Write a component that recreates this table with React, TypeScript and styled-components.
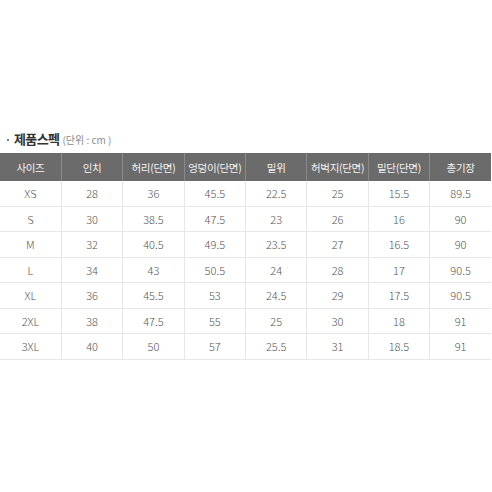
import React from 'react'
import styled, { createGlobalStyle } from 'styled-components'

const GlobalStyle = createGlobalStyle`
  html, body {
    margin: 0;
    padding: 0;
    background: #ffffff;
  }
  body {
    font-family: 'Noto Sans CJK KR', 'Noto Sans', sans-serif;
  }
`

const Page = styled.div`
  width: 492px;
  height: 492px;
  padding-top: 124px;
  box-sizing: border-box;
`

const Title = styled.div`
  display: flex;
  align-items: center;
  padding-left: 7px;
  height: 29px;
  padding-bottom: 0;
  color: #333333;
`

const Bullet = styled.span`
  width: 2px;
  height: 2px;
  border-radius: 50%;
  background: #555555;
  margin-right: 5px;
  margin-top: 2px;
`

const TitleText = styled.span`
  font-size: 13px;
  font-weight: 700;
  letter-spacing: -0.6px;
`

const Unit = styled.span`
  font-size: 10px;
  color: #8a8a8a;
  margin-left: 3px;
  margin-top: 2px;
`

const Table = styled.table`
  width: 491px;
  border-collapse: collapse;
  table-layout: fixed;
`

const HeadCell = styled.th`
  height: 28px;
  padding: 0;
  background: #6b6b6b;
  color: #f4f4f4;
  font-size: 10.5px;
  font-weight: 400;
  letter-spacing: -0.3px;
  border-left: 1px solid #8a8a8a;
  &:first-child {
    border-left: none;
  }
`

const Cell = styled.td`
  height: 24.5px;
  padding: 0;
  text-align: center;
  color: #555555;
  font-size: 11px;
  font-weight: 300;
  border-bottom: 1px solid #e6e6e6;
  border-left: 1px solid #e6e6e6;
  &:first-child {
    border-left: none;
  }
`

const headers = ['사이즈', '인치', '허리(단면)', '엉덩이(단면)', '밑위', '허벅지(단면)', '밑단(단면)', '총기장']

const rows = [
  ['XS', '28', '36', '45.5', '22.5', '25', '15.5', '89.5'],
  ['S', '30', '38.5', '47.5', '23', '26', '16', '90'],
  ['M', '32', '40.5', '49.5', '23.5', '27', '16.5', '90'],
  ['L', '34', '43', '50.5', '24', '28', '17', '90.5'],
  ['XL', '36', '45.5', '53', '24.5', '29', '17.5', '90.5'],
  ['2XL', '38', '47.5', '55', '25', '30', '18', '91'],
  ['3XL', '40', '50', '57', '25.5', '31', '18.5', '91'],
]

export default function App() {
  return (
    <>
      <GlobalStyle />
      <Page>
        <Title>
          <Bullet />
          <TitleText>제품스펙</TitleText>
          <Unit>(단위 : cm )</Unit>
        </Title>
        <Table>
          <thead>
            <tr>
              {headers.map((h) => (
                <HeadCell key={h}>{h}</HeadCell>
              ))}
            </tr>
          </thead>
          <tbody>
            {rows.map((r) => (
              <tr key={r[0]}>
                {r.map((v, i) => (
                  <Cell key={i}>{v}</Cell>
                ))}
              </tr>
            ))}
          </tbody>
        </Table>
      </Page>
    </>
  )
}
